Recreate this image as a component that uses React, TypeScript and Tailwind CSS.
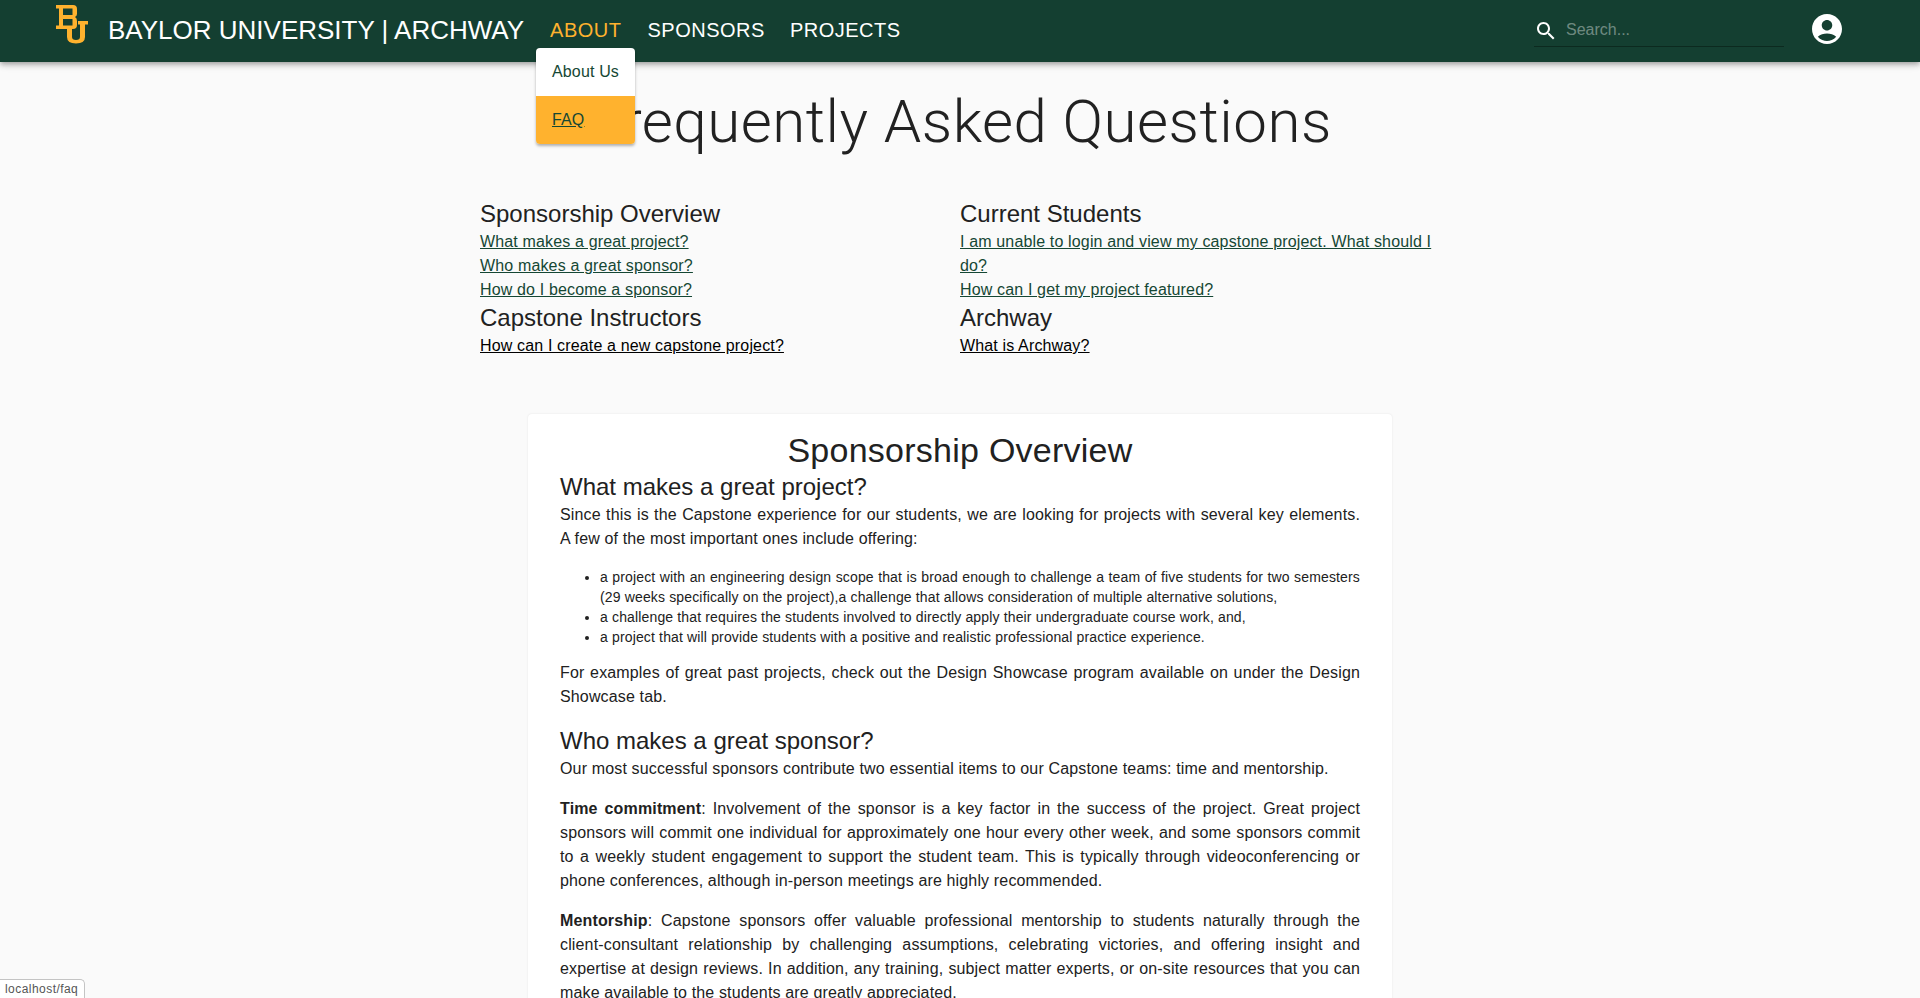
const font = "font-['Liberation_Sans',Arial,sans-serif]";

function Logo() {
  return (
    <svg width="33" height="39" viewBox="0 0 33 39" className="shrink-0">
      <g fill="#ffb22e" fillRule="evenodd">
        <path d="M0 0H17Q21 0 21 4V9Q21 11 19 12Q21 13 21 16V20Q21 24 17 24H0V20.5H3V3.5H0ZM7 3.5V10H16.5V3.5ZM7 14V20.5H16.5V14Z" />
        <path d="M11 24H16V32Q16 35 20 35T24 32V19.5H22V16H32V19.5H29V32Q29 38.5 20 38.5T11 32Z" />
      </g>
    </svg>
  );
}

function H5({ children }: { children: React.ReactNode }) {
  return <h5 className="text-[24px] leading-[1.334] text-[#212121] font-normal">{children}</h5>;
}

function FaqLink({ children, dark }: { children: React.ReactNode; dark?: boolean }) {
  return (
    <a href="#" className={`underline text-[16px] leading-[24px] tracking-[0.15px] ${dark ? "text-black" : "text-[#154734]"}`}>
      {children}
    </a>
  );
}

function P({ children }: { children: React.ReactNode }) {
  return <p className="text-[16px] leading-[24px] tracking-[0.15px] text-[#212121] text-justify">{children}</p>;
}

export default function App() {
  return (
    <div className={`${font} relative h-[998px] overflow-hidden bg-[#fafafa]`}>
      <header className="relative z-10 flex h-[62px] items-center bg-[#143f31] pl-[56px] shadow-[0_2px_4px_-1px_rgba(0,0,0,.2),0_4px_5px_0_rgba(0,0,0,.14),0_1px_10px_0_rgba(0,0,0,.12)]">
        <div className="self-start mt-[5px]"><Logo /></div>
        <span className="ml-[19px] -mt-[2px] text-[26px] text-white">BAYLOR UNIVERSITY | ARCHWAY</span>
        <nav className="ml-[26px] -mt-[2px] flex gap-[26px] text-[20px] tracking-[0.5px]">
          <span className="text-[#ffb22e]">ABOUT</span>
          <span className="text-white">SPONSORS</span>
          <span className="-ml-[1px] text-white">PROJECTS</span>
        </nav>
        <div className="ml-auto flex items-start self-stretch">
          <div className="mt-[7px] flex h-[40px] w-[250px] items-end border-b border-[#0c2a1f] pb-[3px]">
            <svg width="24" height="24" viewBox="0 0 24 24" fill="#fff">
              <path d="M15.5 14h-.79l-.28-.27C15.41 12.59 16 11.11 16 9.5 16 5.91 13.09 3 9.5 3S3 5.91 3 9.5 5.91 16 9.5 16c1.61 0 3.09-.59 4.23-1.57l.27.28v.79l5 4.99L20.49 19l-4.99-5zm-6 0C7.01 14 5 11.99 5 9.5S7.01 5 9.5 5 14 7.01 14 9.5 11.99 14 9.5 14z" />
            </svg>
            <span className="ml-[8px] mb-[1px] text-[16px] text-white/40">Search...</span>
          </div>
          <svg className="mt-[11px] ml-[25px] mr-[75px]" width="36" height="36" viewBox="0 0 24 24" fill="#fff">
            <path d="M12 2C6.48 2 2 6.48 2 12s4.48 10 10 10 10-4.48 10-10S17.52 2 12 2zm0 4c1.93 0 3.5 1.57 3.5 3.5S13.93 13 12 13s-3.5-1.57-3.5-3.5S10.07 6 12 6zm0 14c-2.03 0-4.43-.82-6.14-2.88C7.55 15.8 9.68 15 12 15s4.45.8 6.14 2.12C16.43 19.18 14.03 20 12 20z" />
          </svg>
        </div>
      </header>

      <div className="absolute left-[536px] top-[48px] z-20 w-[99px] overflow-hidden rounded-[4px] bg-white shadow-[0_2px_3px_rgba(0,0,0,.3)]">
        <div className="flex h-[48px] items-center pl-[16px] text-[16px] tracking-[0.15px] text-[#154734]">About Us</div>
        <div className="flex h-[48px] items-center bg-[#ffb22e] pl-[16px] text-[16px] tracking-[0.15px] text-[#154734] underline">FAQ</div>
      </div>

      <main className="flex flex-col items-center">
        <h1 className="mt-[24px] font-['Roboto',sans-serif] text-[60px] font-light leading-[72px] tracking-[0.5px] text-[#212121]">Frequently Asked Questions</h1>

        <div className="mt-[40px] grid w-[960px] grid-cols-2">
          <div className="flex flex-col items-start pr-[10px]">
            <H5>Sponsorship Overview</H5>
            <FaqLink>What makes a great project?</FaqLink>
            <FaqLink>Who makes a great sponsor?</FaqLink>
            <FaqLink>How do I become a sponsor?</FaqLink>
            <H5>Capstone Instructors</H5>
            <FaqLink dark>How can I create a new capstone project?</FaqLink>
          </div>
          <div className="flex flex-col items-start">
            <H5>Current Students</H5>
            <FaqLink>I am unable to login and view my capstone project. What should I do?</FaqLink>
            <FaqLink>How can I get my project featured?</FaqLink>
            <H5>Archway</H5>
            <FaqLink dark>What is Archway?</FaqLink>
          </div>
        </div>

        <section className="mt-[56px] w-[864px] rounded-[4px] bg-white px-[32px] pt-[16px] shadow-[0_0_2px_rgba(0,0,0,.1)]">
          <h4 className="text-center text-[34px] leading-[41px] tracking-[0.25px] text-[#212121]">Sponsorship Overview</h4>
          <H5>What makes a great project?</H5>
          <P>Since this is the Capstone experience for our students, we are looking for projects with several key elements. A few of the most important ones include offering:</P>
          <ul className="mt-[16px] mb-[14px] list-disc pl-[40px] text-[14px] leading-[20px] tracking-[0.15px] text-[#212121] text-justify">
            <li>a project with an engineering design scope that is broad enough to challenge a team of five students for two semesters (29 weeks specifically on the project),a challenge that allows consideration of multiple alternative solutions,</li>
            <li>a challenge that requires the students involved to directly apply their undergraduate course work, and,</li>
            <li>a project that will provide students with a positive and realistic professional practice experience.</li>
          </ul>
          <P>For examples of great past projects, check out the Design Showcase program available on under the Design Showcase tab.</P>
          <div className="mt-[16px]"><H5>Who makes a great sponsor?</H5></div>
          <P>Our most successful sponsors contribute two essential items to our Capstone teams: time and mentorship.</P>
          <div className="mt-[16px]">
            <P><strong>Time commitment</strong>: Involvement of the sponsor is a key factor in the success of the project. Great project sponsors will commit one individual for approximately one hour every other week, and some sponsors commit to a weekly student engagement to support the student team. This is typically through videoconferencing or phone conferences, although in-person meetings are highly recommended.</P>
          </div>
          <div className="mt-[16px]">
            <P><strong>Mentorship</strong>: Capstone sponsors offer valuable professional mentorship to students naturally through the client-consultant relationship by challenging assumptions, celebrating victories, and offering insight and expertise at design reviews. In addition, any training, subject matter experts, or on-site resources that you can make available to the students are greatly appreciated.</P>
          </div>
        </section>
      </main>

      <div className="absolute bottom-0 left-0 z-30 flex h-[19px] items-center rounded-tr-[5px] border-t border-r border-[#c4c4c4] bg-white pl-[5px] pr-[6px] text-[12px] tracking-[0.45px] text-[#555]">localhost/faq</div>
    </div>
  );
}
